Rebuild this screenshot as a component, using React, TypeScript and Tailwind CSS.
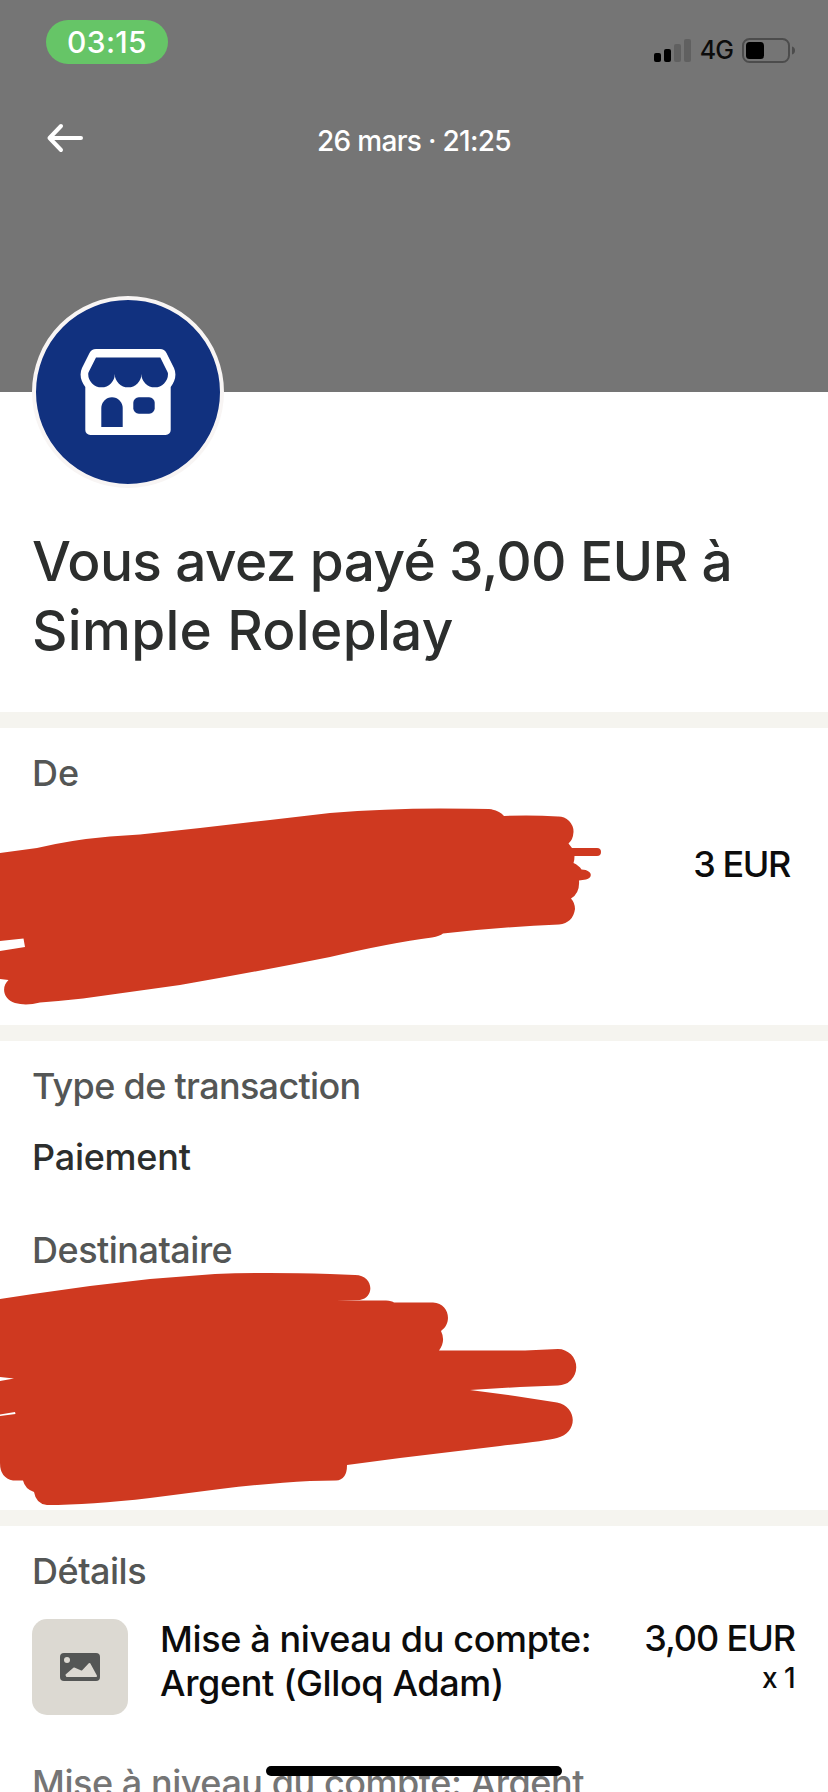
import clsx from "clsx";
import type { ReactNode } from "react";

const item = {
	name: "Mise à niveau du compte:",
	variant: "Argent (Glloq Adam)",
	price: "3,00 EUR",
	quantity: "x 1",
};

function SignalBars() {
	return (
		<svg width="37" height="23" viewBox="0 0 37 23">
			<rect x="0" y="14" width="7" height="9" rx="2" fill="#000" />
			<rect x="10" y="10" width="7" height="13" rx="2" fill="#000" />
			<rect x="20" y="5" width="7" height="18" rx="2" fill="#606060" />
			<rect x="30" y="0" width="7" height="23" rx="2" fill="#606060" />
		</svg>
	);
}

function Battery() {
	return (
		<svg width="54" height="25" viewBox="0 0 54 25">
			<rect
				x="1"
				y="1"
				width="46"
				height="23"
				rx="6.5"
				fill="none"
				stroke="#4c4c4c"
				strokeWidth="2"
			/>
			<rect x="4" y="4" width="18" height="17" rx="3.5" fill="#000" />
			<path d="M50 8.5C52 9 53 10.5 53 12.5S52 16 50 16.500Z" fill="#4c4c4c" />
		</svg>
	);
}

function BackArrow() {
	return (
		<svg
			width="38"
			height="30"
			viewBox="0 0 38 30"
			fill="none"
			stroke="#fff"
			strokeWidth="4"
			strokeLinecap="round"
			strokeLinejoin="round"
		>
			<path d="M15 3L3.500 15L15 27M3.500 15H35" />
		</svg>
	);
}

function StoreIcon() {
	return (
		<svg width="96" height="86" viewBox="0 0 96 86">
			<path
				d="M16 0H80Q84.500 0 86.500 4L94 19Q98 28 90.700 38V81A5 5 0 0 1 85.700 86H10.300A5 5 0 0 1 5.300 81V38Q-2 28 2 19L9.500 4Q11.500 0 16 0Z"
				fill="#fff"
			/>
			<path
				d="M16 8.500H80.300L87.500 23Q88 24 88 25A13.300 13.300 0 0 1 61.400 25A13.300 13.300 0 0 1 34.800 25A13.300 13.300 0 0 1 8.200 25Q8.200 24 8.700 23Z"
				fill="#11317f"
			/>
			<path d="M21.300 78V59A10.700 10.700 0 0 1 42.700 59V78Z" fill="#11317f" />
			<rect x="53.300" y="48.300" width="21.400" height="16.400" rx="5.500" fill="#11317f" />
		</svg>
	);
}

function PictureIcon() {
	return (
		<svg width="40" height="28" viewBox="0 0 40 28">
			<rect width="40" height="28" rx="4" fill="#545655" />
			<circle cx="7" cy="7" r="3" fill="#dcd9d2" />
			<path
				d="M7 23L6.500 22L14 15.500L22 19L29.500 11L36 23Z"
				fill="#dcd9d2"
				stroke="#dcd9d2"
				strokeWidth="2"
				strokeLinejoin="round"
			/>
		</svg>
	);
}

/* Marker strokes hiding the sender and the recipient. */
function Redactions() {
	return (
		<svg
			className="pointer-events-none absolute inset-0"
			width="828"
			height="1792"
			viewBox="0 0 828 1792"
			fill="#cf3920"
		>
			<path d="M0 853L37 848Q70 840 110 836.500L140 834.500L200 828L270 820L330 813Q385 808.500 440 808.500T492 809.500Q500 811 504 816Q532 815 558 816.500A15 15 0 0 1 573.500 832Q573 840 568.500 843.500L572 848H597A4 4 0 0 1 597 856H574.500Q574.500 860 573.500 863Q579 865.500 581.500 869.500C593 870 593 878 586 879.500L579 880.500Q580 893 571 898.500Q575 903 575 909Q573 923 559 924.500Q502 927 443 933.500Q440 936 432 937.500Q390 943 330 957Q250 973 180 985L83 998.500Q60 1001 40 1002.500Q26 1006 15 1003C3 999 1 987 8.500 980L0 979V951L25 947L23.500 938.500L0 941Z" />
			<path d="M0 1299L33 1294L90 1286L150 1279L215 1274Q265 1272 330 1274L355 1275C374 1275 375 1298 360 1300L336 1300.500H386Q392 1301 394 1302.500H433C449 1303 453 1323 441 1331Q446 1341 439 1350.500H525L558 1349A18 18 0 0 1 558 1385.500L520 1387L470 1390L515 1396L557 1402.500C578 1407 578 1433 557 1438Q545 1441 500 1446L400 1458L347 1465Q347 1480 336 1480.500L310 1481Q270 1483 220 1489L150 1498Q90 1505 47 1505Q36 1504 34 1492Q25 1489 23 1480.500H13Q0 1478 0 1463V1416L15.500 1414L15 1412L0 1414.500V1381L14 1378.500L0 1377Z" />
		</svg>
	);
}

function Section({
	className,
	children,
}: {
	className?: string;
	children: ReactNode;
}) {
	return (
		<section
			className={clsx("border-t-16 border-[#f5f4ef] pl-8", className)}
		>
			{children}
		</section>
	);
}

function Label({ className, children }: { className?: string; children: ReactNode }) {
	return (
		<h2 className={clsx("text-[36px] leading-[44px] text-[#545655]", className)}>
			{children}
		</h2>
	);
}

export default function App() {
	return (
		<main className="relative h-[1792px] w-[828px] overflow-hidden bg-white font-['Inter',sans-serif] font-[450] text-[#0c0c0c]">
			<header className="h-[392px] bg-[#757575] pt-5">
				<div className="flex h-11 items-start justify-between pl-[46px] pr-8">
					<span className="flex h-11 w-[122px] items-center justify-center rounded-full bg-[#66c567] text-[30px] tracking-[0.3px] text-white">
						03:15
					</span>
					<div className="flex items-center pt-[18px]">
						<SignalBars />
						<span className="w-[51px] text-center text-[25px] leading-[25px] font-medium tracking-[-0.8px]">
							4G
						</span>
						<Battery />
					</div>
				</div>
				<div className="grid grid-cols-[100px_1fr_100px] pt-[59px]">
					<button aria-label="Retour" className="ml-[46px] w-[38px] self-start">
						<BackArrow />
					</button>
					<p className="text-center text-[28px] leading-9 tracking-[-0.7px] text-white">
						26 mars · 21:25
					</p>
				</div>
			</header>

			<div className="-mt-24 ml-8 flex size-48 items-center justify-center rounded-full border-4 border-[#f8f5f4] bg-[#11317f]">
				<StoreIcon />
			</div>

			<h1 className="ml-8 mt-[39px] h-[185px] text-[55px] leading-[69px] text-[#2c2e2d]">
				<span className="block tracking-[-0.65px]">Vous avez payé 3,00 EUR à</span>
				<span className="block tracking-[0.3px]">Simple Roleplay</span>
			</h1>

			<Section className="h-[313px] pt-[23px] pr-[38px]">
				<Label>De</Label>
				<p className="mt-[47px] text-right text-[36px] leading-[44px] tracking-[-1.4px]">
					3 EUR
				</p>
			</Section>

			<Section className="h-[485px] pt-[23px]">
				<Label className="tracking-[-0.68px]">Type de transaction</Label>
				<p className="mt-[27px] text-[36px] leading-[44px] tracking-[-0.25px] text-[#2c2e2d]">
					Paiement
				</p>
				<Label className="mt-[49px] tracking-[-0.5px]">Destinataire</Label>
			</Section>

			<Section className="pt-[23px] pr-[33px]">
				<Label className="tracking-[-0.5px]">Détails</Label>
				<div className="mt-6 flex">
					<div className="mt-0.5 flex size-24 items-center justify-center rounded-[15px] bg-[#dcd9d2]">
						<PictureIcon />
					</div>
					<p className="ml-8 text-[36px] leading-[44px] tracking-[-0.37px]">
						{item.name}
						<br />
						{item.variant}
					</p>
					<div className="-mt-px ml-auto text-right">
						<p className="text-[36px] leading-[44px] tracking-[-1.1px]">{item.price}</p>
						<p className="text-[28px] leading-9 tracking-[-0.6px]">{item.quantity}</p>
					</div>
				</div>
				<p className="mt-[46px] text-[36px] leading-[44px] tracking-[-0.45px] text-[#757575]">
					{item.name} Argent
				</p>
			</Section>

			<Redactions />
			<div className="absolute bottom-4 left-[266px] h-2.5 w-[296px] rounded-full bg-black" />
		</main>
	);
}
